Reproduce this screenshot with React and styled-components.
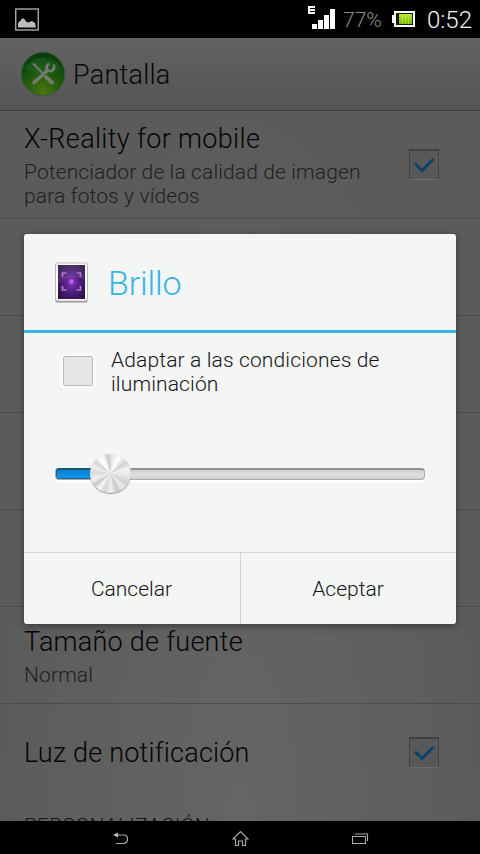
import React from "react";
import styled, { createGlobalStyle } from "styled-components";

const GlobalStyle = createGlobalStyle`
  * {
    box-sizing: border-box;
  }
  body {
    margin: 0;
    background: #000;
    font-family: Roboto, "Noto Sans", sans-serif;
    font-weight: 300;
  }
`;

// Phone screen
const Screen = styled.div`
  position: relative;
  width: 480px;
  height: 854px;
  display: flex;
  flex-direction: column;
  overflow: hidden;
  background: #000;
`;

// Status bar
const StatusBar = styled.div`
  flex: none;
  height: 38px;
  display: flex;
  align-items: center;
  padding: 0 9px 0 15px;
  color: #f4f4f4;
`;

const StatusIcons = styled.div`
  margin-left: auto;
  display: flex;
  align-items: center;
`;

const Percent = styled.span`
  width: 40px;
  margin: 2px 9px 0 7px;
  font-size: 21px;
  line-height: 24px;
  color: #8c8c8c;
  white-space: nowrap;
`;

const Clock = styled.span`
  width: 44px;
  margin: 2px 0 0 12px;
  font-size: 24px;
  line-height: 28px;
  white-space: nowrap;
`;

// Dimmed settings page
const ActionBar = styled.div`
  flex: none;
  height: 73px;
  display: flex;
  align-items: center;
  gap: 7px;
  padding: 0 20px;
  background: linear-gradient(#626262, #555);
  border-bottom: 1px solid #3c3c3c;
  color: #080808;
  font-size: 27px;
  letter-spacing: 0.25px;
`;

const PageTitle = styled.div`
  padding-top: 2px;
`;

const List = styled.div`
  flex: 1;
  min-height: 0;
  overflow: hidden;
  background: radial-gradient(ellipse at 50% 100%, #656565, #5b5b5b 75%);
`;

const Row = styled.div`
  height: ${(props) => (props.$tall ? 108 : 97)}px;
  display: flex;
  align-items: center;
  justify-content: space-between;
  padding: ${(props) => (props.$low ? 3 : 0)}px 41px 0 24px;
  border-bottom: ${(props) => (props.$last ? "none" : "1px solid #4d4d4d")};
`;

const RowText = styled.div`
  padding-top: ${(props) => (props.$tall ? 2 : 0)}px;
`;

const RowTitle = styled.div`
  font-size: 27px;
  line-height: 32px;
  letter-spacing: ${(props) => props.$spacing || 0.25}px;
  color: #050505;
`;

const RowSummary = styled.div`
  margin-top: 5px;
  font-size: 21px;
  line-height: 24px;
  letter-spacing: 0.12px;
  color: #202020;
  white-space: pre-line;
`;

const CheckBox = styled.div`
  flex: none;
  width: 30px;
  height: 31px;
  display: flex;
  background: #585858;
  border: 1px solid #424242;
  border-top: 2px solid #404040;
  border-bottom-color: #6d6d6d;
`;

const SectionTitle = styled.div`
  padding: 13px 24px 0;
  font-size: 21px;
  line-height: 24px;
  letter-spacing: 0.13px;
  color: #151515;
`;

// Navigation bar
const NavBar = styled.div`
  flex: none;
  height: 33px;
  display: grid;
  grid-template-columns: repeat(3, 120px);
  justify-content: center;
  align-items: center;
  justify-items: center;
  padding-top: 2px;
`;

// Brightness dialog over the list
const Dialog = styled.div`
  position: absolute;
  left: 24px;
  top: 234px;
  width: 432px;
  height: 390px;
  display: flex;
  flex-direction: column;
  border-radius: 3px;
  background: #f4f5f5;
  box-shadow: 0 2px 7px rgba(0, 0, 0, 0.4);
  overflow: hidden;
`;

const DialogHeader = styled.div`
  height: 99px;
  display: flex;
  align-items: center;
  gap: 18px;
  padding: 2px 0 0 29px;
  border-bottom: 3px solid #33b5e5;
  color: #33b5e5;
  font-size: 34px;
  letter-spacing: -0.15px;
`;

const DialogBody = styled.div`
  flex: 1;
  padding: 15px 31px 0;
`;

const Option = styled.div`
  display: flex;
  gap: 18px;
  padding-left: 8px;
  color: #141414;
  font-size: 21px;
  line-height: 24px;
  letter-spacing: 0.14px;
  white-space: pre-line;
`;

const EmptyBox = styled.div`
  width: 30px;
  height: 30px;
  margin-top: 8px;
  border: 1px solid #b9b9b9;
  border-radius: 2px;
  background: #e6e6e6;
  box-shadow: 0 0 2px 2px #fbfcfc;
`;

const Slider = styled.div`
  height: 40px;
  margin-top: 58px;
  display: flex;
  align-items: center;
`;

const Track = styled.div`
  position: relative;
  width: 370px;
  height: 12px;
  border: 1px solid #aaacac;
  border-top: 2px solid #8f9393;
  border-radius: 4px;
  background: linear-gradient(#cfcfcf, #e0e0e0 50%, #d2d2d2);
  box-shadow: 0 2px 3px #fff;
`;

const Progress = styled.div`
  position: absolute;
  left: 0;
  top: -2px;
  height: 11px;
  border: 1px solid #25658c;
  border-top: 2px solid #1c5472;
  border-radius: 3px 0 0 3px;
  background: linear-gradient(#087fd3, #1195f0);
`;

const Thumb = styled.div`
  position: absolute;
  left: 34px;
  top: -16px;
  width: 41px;
  height: 39px;
  border-radius: 50%;
  background: conic-gradient(
    #dcdcdc,
    #f4f4f4 14deg,
    #fff 30deg,
    #e2e2e2 44deg,
    #d2d2d2 56deg,
    #f2f2f2 72deg,
    #e6e6e6 98deg,
    #d2d2d2 122deg,
    #ececec 140deg,
    #c9c9c9 156deg,
    #f0f0f0 180deg,
    #d4d4d4 200deg,
    #fafafa 218deg,
    #c8c8c8 234deg,
    #f0f0f0 250deg,
    #dadada 275deg,
    #efefef 292deg,
    #d4d4d4 308deg,
    #fff 322deg,
    #f4f4f4 338deg,
    #c8c8c8 352deg,
    #dcdcdc 360deg
  );
  box-shadow: 0 1px 1px #8d8d8d, inset 0 0 1px #ccc;
`;

const Buttons = styled.div`
  height: 72px;
  display: grid;
  grid-template-columns: 217px 1fr;
  border-top: 1px solid #d2d3d3;
`;

const DialogButton = styled.button`
  padding: 0 1px 0 0;
  border: 0;
  border-right: ${(props) => (props.$divider ? "1px solid #cfd0d0" : "none")};
  background: none;
  color: #141414;
  font: 300 21px/24px Roboto, "Noto Sans", sans-serif;
`;

// Icons
const PictureIcon = () => (
  <svg width="24" height="23" viewBox="0 0 24 23">
    <rect x=".75" y="1" width="22.5" height="21" fill="none" stroke="#b6b6b6" strokeWidth="1.3" />
    <path d="M3 19.5v-4.5l3-3 1-1.500h2l2 3 2 1 4-1.500 3 2 1 4.500z" fill="#bcbcbc" />
  </svg>
);

const SignalIcon = () => (
  <svg width="28" height="28" viewBox="0 0 28 28" fill="#fff">
    <path d="M0 1h7v2H2v1h5v2H2v1h5v2H0z" />
    <path d="M4 19h5v5H4zM10 15h5v9h-5zM16 10h5v14h-5zM22 4h5v20h-5z" />
  </svg>
);

const BatteryIcon = () => (
  <svg width="23" height="16" viewBox="0 0 23 16">
    <path d="M2 0h21v16H2v-4H0V4h2z" fill="#fff" />
    <path d="M4 2h17v12H4z" fill="#151b0c" />
    <path d="M7 3h13v10H7z" fill="url(#charge)" />
    <path d="M10.5 3v10M13.5 3v10M16.5 3v10" stroke="#c6ed55" strokeWidth=".6" />
    <defs>
      <linearGradient id="charge" x2="0" y2="1">
        <stop stopColor="#c0e82c" />
        <stop offset="1" stopColor="#73b900" />
      </linearGradient>
    </defs>
  </svg>
);

const ToolsIcon = () => (
  <svg width="46" height="46" viewBox="0 0 46 46">
    <defs>
      <radialGradient id="green" cx=".5" cy=".9" r=".85">
        <stop stopColor="#4c7512" />
        <stop offset=".45" stopColor="#225d0d" />
        <stop offset="1" stopColor="#063f0c" />
      </radialGradient>
    </defs>
    <circle cx="23" cy="23" r="21.7" fill="url(#green)" stroke="#3a573b" />
    <path d="M5 18a19 16 0 0 1 36 0q-17 9-36 0" fill="#4c8751" opacity=".18" />
    <g fill="none" stroke="#737b70" strokeLinecap="round">
      <path d="m13.5 13 8 8" strokeWidth="2" />
      <path d="m26 26 6 5.5" strokeWidth="4" />
      <path d="M14 31.5 27 20" strokeWidth="3.6" />
      <path d="M29 12.5q-4 3.5-1.500 6.500 4 3 6.500-1.500v-4" strokeWidth="2.6" strokeLinecap="butt" />
    </g>
  </svg>
);

const CheckIcon = () => (
  <svg width="28" height="28" viewBox="0 0 28 28">
    <path d="m5 12.5 7 7L23.5 8" fill="none" stroke="#07436d" strokeWidth="2.9" />
  </svg>
);

const BrightnessIcon = () => (
  <svg width="37" height="42" viewBox="0 0 37 42">
    <defs>
      <radialGradient id="purple" cx=".5" cy=".5" r=".65">
        <stop stopColor="#8e3bc0" />
        <stop offset=".35" stopColor="#5a2490" />
        <stop offset="1" stopColor="#25103f" />
      </radialGradient>
    </defs>
    <rect x="2.5" y="3" width="32" height="37.5" rx="1.5" fill="#8d8d8d" />
    <rect x="2.5" y="1" width="32" height="38" rx="1.5" fill="#fafafa" stroke="#b5b5b5" strokeWidth=".9" />
    <path d="M5 3h27v34H5z" fill="url(#purple)" />
    <path d="M5 3h27v15q-12-6-27 3z" fill="#aaa" opacity=".14" />
    <path d="M9.5 15v-4h4M23.5 11h4v4M9.5 24v4h4M23.5 28h4v-4" fill="none" stroke="#ad78cf" strokeWidth="1.7" />
    <circle cx="18.5" cy="19.5" r="2.3" fill="#c75cf0" />
  </svg>
);

const BackIcon = () => (
  <svg width="15" height="13" viewBox="0 0 15 13">
    <path d="M3 3h7.5q4 0 4 4t-4 4.500H3" fill="none" stroke="#aaa" strokeWidth="1.2" />
    <path d="M0 3 5 .5v5z" fill="#bbb" />
  </svg>
);

const HomeIcon = () => (
  <svg width="17" height="18" viewBox="0 0 17 18">
    <path d="M1 9 8.5 1.5 16 9h-2.500v6.500h-3V11h-4v4.500h-3V9z" fill="none" stroke="#aaa" strokeWidth="1.2" />
  </svg>
);

const RecentIcon = () => (
  <svg width="17" height="12" viewBox="0 0 17 12">
    <path d="M.5 3.5h13v7H.5zM3 1h12.500v7" fill="none" stroke="#aaa" strokeWidth="1.1" />
  </svg>
);

export default function App() {
  const brightness = 38;

  return (
    <Screen>
      <GlobalStyle />
      <StatusBar>
        <PictureIcon />
        <StatusIcons>
          <SignalIcon />
          <Percent>77%</Percent>
          <BatteryIcon />
          <Clock>0:52</Clock>
        </StatusIcons>
      </StatusBar>

      <ActionBar>
        <ToolsIcon />
        <PageTitle>Pantalla</PageTitle>
      </ActionBar>

      <List>
        <Row $tall>
          <RowText $tall>
            <RowTitle $spacing={0.34}>X-Reality for mobile</RowTitle>
            <RowSummary>{"Potenciador de la calidad de imagen\npara fotos y vídeos"}</RowSummary>
          </RowText>
          <CheckBox>
            <CheckIcon />
          </CheckBox>
        </Row>
        {/* Rows behind the dialog */}
        <Row />
        <Row />
        <Row />
        <Row />
        <Row $low>
          <RowText>
            <RowTitle>Tamaño de fuente</RowTitle>
            <RowSummary>Normal</RowSummary>
          </RowText>
        </Row>
        <Row $last>
          <RowTitle $spacing={0.2}>Luz de notificación</RowTitle>
          <CheckBox>
            <CheckIcon />
          </CheckBox>
        </Row>
        <SectionTitle>PERSONALIZACIÓN</SectionTitle>
      </List>

      <NavBar>
        <BackIcon />
        <HomeIcon />
        <RecentIcon />
      </NavBar>

      <Dialog>
        <DialogHeader>
          <BrightnessIcon />
          Brillo
        </DialogHeader>
        <DialogBody>
          <Option>
            <EmptyBox />
            <div>{"Adaptar a las condiciones de\niluminación"}</div>
          </Option>
          <Slider>
            <Track>
              <Progress style={{ width: brightness }} />
              <Thumb />
            </Track>
          </Slider>
        </DialogBody>
        <Buttons>
          <DialogButton $divider>Cancelar</DialogButton>
          <DialogButton>Aceptar</DialogButton>
        </Buttons>
      </Dialog>
    </Screen>
  );
}
